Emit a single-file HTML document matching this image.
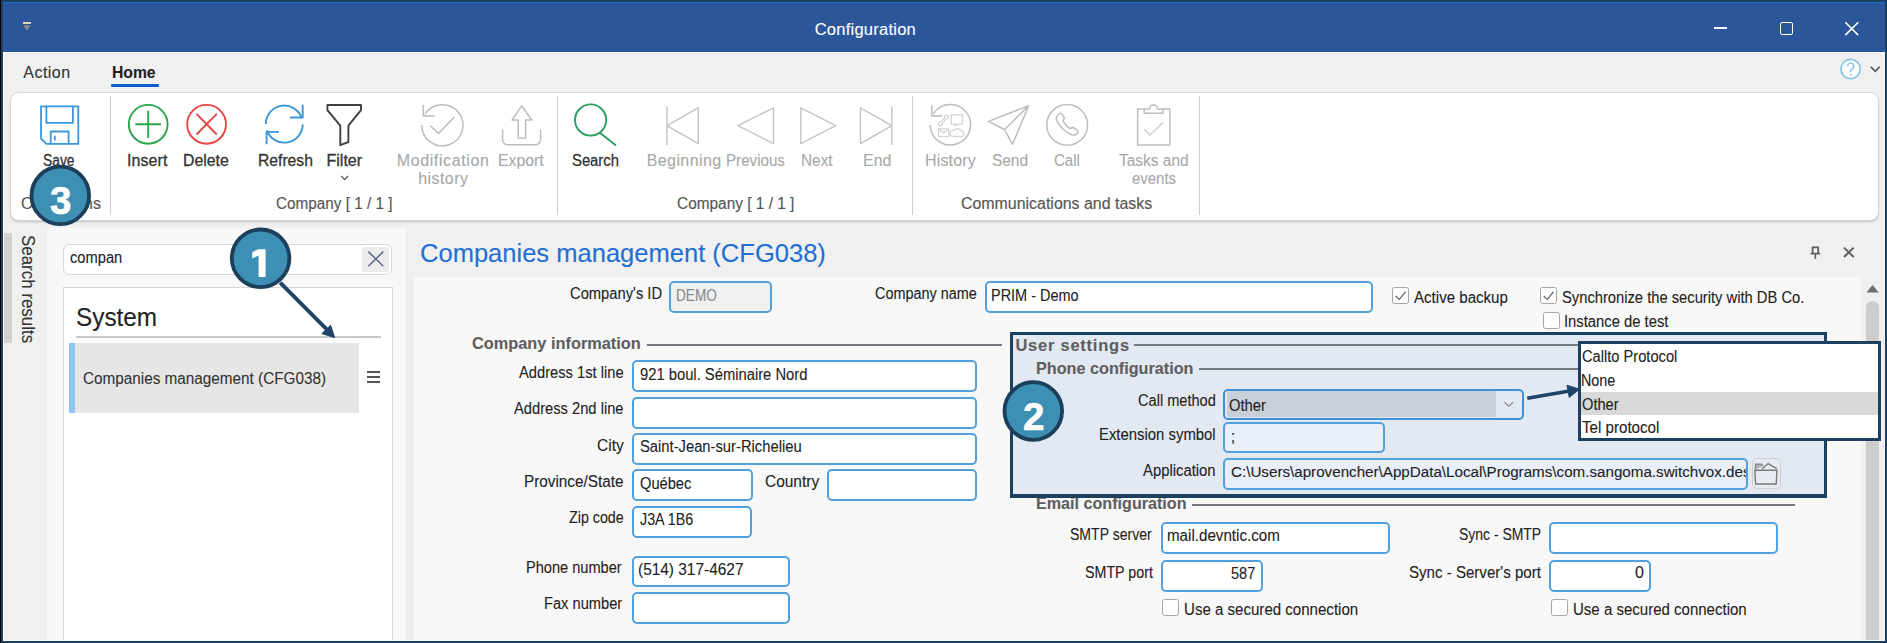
<!DOCTYPE html>
<html><head><meta charset="utf-8">
<style>
*{margin:0;padding:0;box-sizing:border-box}
html,body{width:1887px;height:643px;overflow:hidden;background:#1c4060}
body{position:relative;font-family:"Liberation Sans",sans-serif;color:#222}
.a{position:absolute}
.t{position:absolute;white-space:nowrap;-webkit-text-stroke:0.1px currentColor}
.inp{position:absolute;border:2px solid #52a0dc;border-radius:5px;background:#fff}
.cb{position:absolute;width:17px;height:17px;border:1.3px solid #a6a6a6;border-radius:2.5px;background:#fff}
svg{position:absolute;overflow:visible}
</style></head><body>
<!-- title bar -->
<div class="a" style="left:3px;top:2px;width:1882px;height:1px;background:#1e6bd0"></div>
<div class="a" style="left:3px;top:3px;width:1882px;height:49px;background:#2b579a"></div>
<!-- client area -->
<div class="a" style="left:3px;top:52px;width:1882px;height:589px;background:#f0f0f0;border-top:1px solid #fff;border-left:1px solid #fff"></div>

<!-- qat icon -->
<div class="a" style="left:23px;top:22px;width:7.5px;height:2px;background:#ddd5c5"></div>
<svg style="left:0;top:0" width="1" height="1"><polygon points="23.2,25.3 30.6,25.3 26.9,30.6" fill="#8c8a80"/></svg>
<!-- window buttons -->
<div class="a" style="left:1714.3px;top:27.3px;width:13.2px;height:1.6px;background:#fff"></div>
<div class="a" style="left:1779.8px;top:21.9px;width:13.2px;height:13.2px;border:1.6px solid #fff;border-radius:2px"></div>
<svg style="left:0;top:0" width="1" height="1"><path d="M1845.3 22.2L1858.2 35.1M1858.2 22.2L1845.3 35.1" stroke="#fff" stroke-width="1.6"/></svg>

<!-- tabs -->
<div class="a" style="left:111.2px;top:84.3px;width:47.4px;height:3.2px;background:#0f5ed0;border-radius:1px"></div>
<!-- help -->
<svg style="left:0;top:0" width="1" height="1"><circle cx="1850.6" cy="69" r="9.6" fill="#fff" stroke="#8cc4e8" stroke-width="1.7"/><path d="M1847.6 66.2a3.1 3.1 0 1 1 4.4 2.8c-1 .5-1.4 1.2-1.4 2.2v1" stroke="#8cc4e8" stroke-width="1.5" fill="none"/><circle cx="1850.6" cy="74.6" r="0.9" fill="#8cc4e8"/><path d="M1870.8 66.8L1875.3 71.3L1879.8 66.8" stroke="#555" stroke-width="1.6" fill="none"/></svg>

<!-- ribbon panel -->
<div class="a" style="left:9.8px;top:91.6px;width:1868.9px;height:129.4px;background:#fff;border:1.8px solid #d6d6d6;border-radius:9px;box-shadow:0 1px 1px #c8c8c8,0 2.5px 3px rgba(0,0,0,0.04)"></div>
<!-- separators -->
<div class="a" style="left:110px;top:96px;width:1.3px;height:119px;background:#cfcfcf"></div>
<div class="a" style="left:557px;top:96px;width:1.3px;height:119px;background:#cfcfcf"></div>
<div class="a" style="left:912px;top:96px;width:1.3px;height:119px;background:#cfcfcf"></div>
<div class="a" style="left:1198.6px;top:96px;width:1.3px;height:119px;background:#cfcfcf"></div>
<!-- ribbon icons -->
<svg style="left:0;top:0" width="1" height="1" fill="none" stroke-linejoin="round">
 <!-- save -->
 <g stroke="#3a96dd" stroke-width="1.8">
  <path d="M41 106.4H78.3V143.9H46.4L41 138.5Z"/>
  <path d="M46.4 106.4V122.9H72.9V106.4"/>
  <path d="M50.7 143.9V131.5H68.6V143.9"/>
  <path d="M54.8 135.7V140.4"/>
 </g>
 <!-- insert -->
 <g stroke="#2ba64c" stroke-width="1.9">
  <circle cx="148.2" cy="124.3" r="19.4"/>
  <path d="M135.3 124.3H161M148.2 110.8V138"/>
 </g>
 <!-- delete -->
 <g stroke="#e84545" stroke-width="1.9">
  <circle cx="206.6" cy="124.3" r="19.4"/>
  <path d="M196.5 113.9L216.8 134.5M216.8 113.9L196.5 134.5"/>
 </g>
 <!-- refresh -->
 <g stroke="#3a96dd" stroke-width="1.9">
  <path d="M265.8 124.1A18.5 18.5 0 0 1 301.7 117.8"/>
  <path d="M302.7 104.7V117.5H289.9"/>
  <path d="M302.8 124.6A18.5 18.5 0 0 1 266.9 130.4"/>
  <path d="M266.6 144.3V131.9H279"/>
 </g>
 <!-- filter -->
 <path stroke="#404040" stroke-width="1.9" d="M327.4 105H361V110.1L348.4 125.7V142L340.3 145.1V125.7L327.4 110.1Z"/>
 <path stroke="#606060" stroke-width="1.4" d="M341.2 176L344.6 179.4L348 176"/>
 <!-- modification history -->
 <g stroke="#bdbdbd" stroke-width="1.5">
  <path d="M421.8 124.9A20.6 20.6 0 1 0 424.9 114.4"/>
  <path d="M423.3 105V116H434.6"/>
  <path d="M430.3 125.7L438.5 133.4L454.4 117.1"/>
 </g>
 <!-- export -->
 <g stroke="#bdbdbd" stroke-width="1.5">
  <path d="M521.7 105.8L512 120.1H518.2V138.1H525.6V120.1H531.8Z"/>
  <path d="M502.6 129.5V139.7A5 5 0 0 0 507.6 144.7H535.6A5 5 0 0 0 540.6 139.7V129.5"/>
 </g>
 <!-- search -->
 <g stroke="#2ba060" stroke-width="1.9">
  <circle cx="590.6" cy="120" r="15.6"/>
  <path d="M599.6 132.6L616 145.6"/>
 </g>
 <!-- nav -->
 <g stroke="#c4c4c4" stroke-width="1.4">
  <path d="M667 106.6V145M698.2 107.8V143.6L667 125.7Z"/>
  <path d="M773.5 107.8V143.6L738 125.7Z"/>
  <path d="M800.8 107.8V143.6L835.8 125.7Z"/>
  <path d="M891.8 106.6V145M860.4 107.8V143.6L891.8 125.7Z"/>
 </g>
 <!-- history -->
 <g stroke="#bdbdbd" stroke-width="1.5">
  <path d="M930.2 124.9A20.2 20.2 0 1 0 933.3 114"/>
  <path d="M931.8 105V116H942.3"/>
 </g>
 <g stroke="#d2d2d2" stroke-width="1.2">
  <rect x="951.2" y="114.8" width="11.3" height="9.3"/>
  <path d="M954 124.1L955.5 126L957 124.1"/>
  <rect x="938.4" y="128.8" width="10.3" height="7.7"/>
  <path d="M938.4 129L943.5 133L948.7 129"/>
  <path d="M952 136.3H962.5A2.8 2.8 0 0 0 961 131A3.6 3.6 0 0 0 954.5 130.5A3 3 0 0 0 952 136.3Z"/>
  <path d="M939.6 125.6C937.6 124.6 938.2 121.4 940.8 121.6L944.6 117.8C944.2 115.8 946.2 114.4 947.6 115.4C949 116.8 948.2 119.4 946 119.2L942.4 122.8C942.8 124.8 941.4 126.4 939.6 125.6Z"/>
 </g>
 <!-- send -->
 <path stroke="#bdbdbd" stroke-width="1.5" d="M988.5 121.4L1028.6 105.8L1012.6 144.3L1004.5 129.5ZM1004.5 129.5L1028.6 105.8"/>
 <!-- call -->
 <g stroke="#bdbdbd" stroke-width="1.5">
  <circle cx="1067.2" cy="124.9" r="20.4"/>
  <path d="M1058.2 114.8C1059.4 113.2 1061.3 113 1062.3 114.3L1064.5 118.3L1062.9 120.6C1064.6 124 1067 126.8 1070.2 128.5L1072.6 127.1L1077.3 130.2C1078.4 131.1 1078.1 132.8 1076.8 133.9C1075.4 135.1 1073.9 135.6 1071.9 134.9C1065.4 132.2 1059.8 126.6 1056.7 120.5C1056 118.5 1056.6 116.3 1058.2 114.8Z"/>
 </g>
 <!-- tasks -->
 <g stroke="#bdbdbd" stroke-width="1.5">
  <path d="M1144.2 108.9H1137.6V145.1H1169.9V108.9H1162.9"/>
  <path d="M1144.2 108.9V113.2H1162.9V108.9H1157.5A3.9 3.9 0 0 0 1149.6 108.9Z"/>
 </g>
 <path stroke="#d0d0d0" stroke-width="1.5" d="M1144.2 129.2L1150 135L1162.9 122.6"/>
</svg>

<!-- left side tab -->
<div class="a" style="left:4px;top:233px;width:8px;height:110px;background:#d0d0d0"></div>
<div class="t" style="left:36.7px;top:234.8px;font-size:18px;line-height:18px;color:#333;transform-origin:0 0;transform:rotate(90deg) scaleX(0.94)">Search results</div>
<!-- left panel -->
<div class="a" style="left:47px;top:228px;width:359px;height:413px;background:#f8f8f8"></div>
<div class="a" style="left:62.8px;top:243.5px;width:329.7px;height:31.5px;background:#fff;border:1.7px solid #d8d8d8;border-radius:6px"></div>
<div class="a" style="left:362px;top:247.4px;width:27px;height:24.3px;background:#ececec;border-radius:3px"></div>
<svg style="left:0;top:0" width="1" height="1"><path d="M368.3 251.6L383.3 266.3M383.3 251.6L368.3 266.3" stroke="#5a6a8a" stroke-width="1.5"/></svg>
<div class="a" style="left:62.6px;top:286.8px;width:330px;height:360px;background:#fff;border:1.8px solid #d6d6d6"></div>
<div class="a" style="left:76.4px;top:336.3px;width:305px;height:1.4px;background:#c8c8c8"></div>
<div class="a" style="left:69.3px;top:342.6px;width:289.7px;height:70.6px;background:#e6e6e6"></div>
<div class="a" style="left:69.3px;top:342.6px;width:5.6px;height:70.6px;background:#8ec8f0"></div>
<div class="a" style="left:367.4px;top:371px;width:12.6px;height:2px;background:#555"></div>
<div class="a" style="left:367.4px;top:376px;width:12.6px;height:2px;background:#555"></div>
<div class="a" style="left:367.4px;top:381px;width:12.6px;height:2px;background:#555"></div>

<!-- main header strip -->
<div class="a" style="left:406px;top:229px;width:8px;height:412px;background:#efefef"></div>
<!-- main form area -->
<div class="a" style="left:414px;top:276.6px;width:1446.5px;height:365px;background:#f8f8f8"></div>
<!-- pin & close -->
<svg style="left:0;top:0" width="1" height="1">
 <path d="M1812.6 247.4H1818.2V253.6H1812.6Z M1810.6 253.6H1820.2" stroke="#606060" stroke-width="1.8" fill="none"/>
 <path d="M1815.4 253.6V259" stroke="#606060" stroke-width="1.6"/>
 <path d="M1844 247.6L1853.7 257M1853.7 247.6L1844 257" stroke="#606060" stroke-width="2"/>
</svg>
<!-- scrollbar -->
<svg style="left:0;top:0" width="1" height="1"><polygon points="1866.4,292.4 1878.8,292.4 1872.6,285" fill="#6e6e6e"/></svg>
<div class="a" style="left:1866.3px;top:300.5px;width:12.7px;height:345px;background:#cdcdcd;border-radius:6px 6px 0 0"></div>

<!-- inputs -->
<div class="inp" style="left:669.3px;top:281.3px;width:102.6px;height:31.7px;background:#f0f0f0"></div>
<div class="inp" style="left:985.4px;top:281.4px;width:387.8px;height:31.7px"></div>
<div class="cb" style="left:1392px;top:287.3px"></div>
<div class="cb" style="left:1540px;top:287.3px"></div>
<svg style="left:0;top:0" width="1" height="1" fill="none" stroke="#6a6a6a" stroke-width="1.3"><path d="M1395.7 296L1399.3 299.4L1405.6 291.6"/><path d="M1543.7 296L1547.3 299.4L1553.6 291.6"/></svg>
<div class="cb" style="left:1542.5px;top:312px"></div>

<!-- company info -->
<div class="a" style="left:646.5px;top:344px;width:355.3px;height:1.6px;background:#747a80"></div>
<div class="inp" style="left:632.1px;top:360.2px;width:344.7px;height:32.2px"></div>
<div class="inp" style="left:632.1px;top:396.9px;width:344.7px;height:32.2px"></div>
<div class="inp" style="left:632.1px;top:433.1px;width:344.7px;height:32.2px"></div>
<div class="inp" style="left:632.1px;top:469.4px;width:120.5px;height:31.9px"></div>
<div class="inp" style="left:826.9px;top:469.4px;width:149.9px;height:31.9px"></div>
<div class="inp" style="left:632.1px;top:505.7px;width:119.5px;height:32.2px"></div>
<div class="inp" style="left:632.1px;top:555.6px;width:157.9px;height:31.8px"></div>
<div class="inp" style="left:632.1px;top:591.9px;width:157.9px;height:31.8px"></div>

<!-- email config -->
<div class="a" style="left:1191.8px;top:504.1px;width:603.2px;height:1.6px;background:#747a80"></div>
<div class="inp" style="left:1160.9px;top:522px;width:229.1px;height:32.2px"></div>
<div class="inp" style="left:1160.9px;top:559.7px;width:102.3px;height:32.1px"></div>
<div class="inp" style="left:1549.3px;top:522.1px;width:229.2px;height:32.3px"></div>
<div class="inp" style="left:1549.3px;top:559.8px;width:102px;height:31.8px"></div>
<div class="cb" style="left:1162.3px;top:598.6px"></div>
<div class="cb" style="left:1550.9px;top:598.8px"></div>

<!-- user settings box -->
<div class="a" style="left:1009.9px;top:332.2px;width:817.3px;height:165.5px;background:#e3e9f2;border:3.8px solid #1c4060"></div>
<div class="a" style="left:1133.8px;top:344.2px;width:450px;height:1.6px;background:#747a80"></div>
<div class="a" style="left:1198.5px;top:368.3px;width:385px;height:1.6px;background:#747a80"></div>
<div class="inp" style="left:1223.4px;top:388.7px;width:300.4px;height:31.7px;background:#e3e9f2;border:2px solid #3d8fd8"></div>
<div class="a" style="left:1226.5px;top:391.4px;width:269.8px;height:25.8px;background:#c9cfd9;border-radius:2px"></div>
<svg style="left:0;top:0" width="1" height="1"><path d="M1504.6 402.2L1508.8 406.4L1513 402.2" stroke="#8a8a8a" stroke-width="1.3" fill="none"/></svg>
<div class="inp" style="left:1223.4px;top:422.4px;width:161.3px;height:31.1px;background:#e9eff8"></div>
<div class="inp" style="left:1223.4px;top:458.1px;width:524.8px;height:31.7px;background:#e9eff8;overflow:hidden"><div class="t" id="apptext" style="left:5.3px;top:3.8px;font-size:15.5px;line-height:15.5px;color:#222;transform-origin:0 0;transform:scaleX(0.979)">C:\Users\aprovencher\AppData\Local\Programs\com.sangoma.switchvox.desktop</div></div>
<div class="a" style="left:1751.6px;top:458.3px;width:29.8px;height:31px;background:#e6ebf2;border:1.3px solid #c8ced6;border-radius:5px"></div>
<svg style="left:0;top:0" width="1" height="1" fill="none" stroke="#7a7a7a" stroke-width="1.4"><path d="M1755.5 469.5V464.2H1761.8L1763 466" fill="#b0b0b0" stroke="#8a8a8a"/><path d="M1762 469L1768 463.6L1776.8 468.6"/><path d="M1754.8 470.3H1777L1776.2 484H1755.6Z"/></svg>

<!-- popup -->
<div class="a" style="left:1578px;top:341.1px;width:303.2px;height:100.4px;background:#fff;border:3.2px solid #1c4060"></div>
<div class="a" style="left:1581.2px;top:392.1px;width:296.8px;height:22.5px;background:#d9d9d9"></div>
<!--POPUP-->

<div class="t" style="left:814.70px;top:21px;font-size:16.5px;line-height:16.5px;font-weight:normal;color:#fff;letter-spacing:0.244px;">Configuration</div>
<div class="t" style="left:23.30px;top:65px;font-size:16px;line-height:16px;font-weight:normal;color:#333;letter-spacing:0.466px;">Action</div>
<div class="t" style="left:111.82px;top:65px;font-size:16px;line-height:16px;font-weight:bold;color:#222;letter-spacing:0.000px;transform-origin:0 0;transform:scaleX(0.9804);">Home</div>
<div class="t" style="left:43.40px;top:153px;font-size:16px;line-height:16px;font-weight:normal;color:#333;letter-spacing:0.000px;transform-origin:0 0;transform:scaleX(0.8641);-webkit-text-stroke:0.3px currentColor;">Save</div>
<div class="t" style="left:127.00px;top:153px;font-size:16px;line-height:16px;font-weight:normal;color:#333;letter-spacing:0.086px;-webkit-text-stroke:0.3px currentColor;">Insert</div>
<div class="t" style="left:183.41px;top:153px;font-size:16px;line-height:16px;font-weight:normal;color:#333;letter-spacing:0.000px;transform-origin:0 0;transform:scaleX(0.9900);-webkit-text-stroke:0.3px currentColor;">Delete</div>
<div class="t" style="left:258.22px;top:153px;font-size:16px;line-height:16px;font-weight:normal;color:#333;letter-spacing:0.000px;transform-origin:0 0;transform:scaleX(0.9792);-webkit-text-stroke:0.3px currentColor;">Refresh</div>
<div class="t" style="left:326.40px;top:153px;font-size:16px;line-height:16px;font-weight:normal;color:#333;letter-spacing:0.035px;-webkit-text-stroke:0.3px currentColor;">Filter</div>
<div class="t" style="left:396.70px;top:153px;font-size:16px;line-height:16px;font-weight:normal;color:#a8a8a8;letter-spacing:0.620px;">Modification</div>
<div class="t" style="left:418.30px;top:171px;font-size:16px;line-height:16px;font-weight:normal;color:#a8a8a8;letter-spacing:0.412px;">history</div>
<div class="t" style="left:497.81px;top:153px;font-size:16px;line-height:16px;font-weight:normal;color:#a8a8a8;letter-spacing:0.000px;transform-origin:0 0;transform:scaleX(0.9892);">Export</div>
<div class="t" style="left:572.40px;top:153px;font-size:16px;line-height:16px;font-weight:normal;color:#333;letter-spacing:0.000px;transform-origin:0 0;transform:scaleX(0.9258);-webkit-text-stroke:0.3px currentColor;">Search</div>
<div class="t" style="left:646.70px;top:153px;font-size:16px;line-height:16px;font-weight:normal;color:#a8a8a8;letter-spacing:0.416px;">Beginning</div>
<div class="t" style="left:726.05px;top:153px;font-size:16px;line-height:16px;font-weight:normal;color:#a8a8a8;letter-spacing:0.000px;transform-origin:0 0;transform:scaleX(0.9469);">Previous</div>
<div class="t" style="left:800.84px;top:153px;font-size:16px;line-height:16px;font-weight:normal;color:#a8a8a8;letter-spacing:0.000px;transform-origin:0 0;transform:scaleX(0.9614);">Next</div>
<div class="t" style="left:862.50px;top:153px;font-size:16px;line-height:16px;font-weight:normal;color:#a8a8a8;letter-spacing:0.000px;transform-origin:0 0;transform:scaleX(0.9974);">End</div>
<div class="t" style="left:925.00px;top:153px;font-size:16px;line-height:16px;font-weight:normal;color:#a8a8a8;letter-spacing:0.153px;">History</div>
<div class="t" style="left:991.50px;top:153px;font-size:16px;line-height:16px;font-weight:normal;color:#a8a8a8;letter-spacing:0.000px;transform-origin:0 0;transform:scaleX(0.9625);">Send</div>
<div class="t" style="left:1054.00px;top:153px;font-size:16px;line-height:16px;font-weight:normal;color:#a8a8a8;letter-spacing:0.000px;transform-origin:0 0;transform:scaleX(0.9405);">Call</div>
<div class="t" style="left:1119.20px;top:153px;font-size:16px;line-height:16px;font-weight:normal;color:#a8a8a8;letter-spacing:0.000px;transform-origin:0 0;transform:scaleX(0.9671);">Tasks and</div>
<div class="t" style="left:1132.40px;top:171px;font-size:16px;line-height:16px;font-weight:normal;color:#a8a8a8;letter-spacing:0.000px;transform-origin:0 0;transform:scaleX(0.9334);">events</div>
<div class="t" style="left:21.00px;top:196px;font-size:16px;line-height:16px;font-weight:normal;color:#555;letter-spacing:0.193px;-webkit-text-stroke:0.15px currentColor;">Operations</div>
<div class="t" style="left:276.00px;top:196px;font-size:16px;line-height:16px;font-weight:normal;color:#555;letter-spacing:0.000px;transform-origin:0 0;transform:scaleX(0.9556);-webkit-text-stroke:0.15px currentColor;">Company [ 1 / 1 ]</div>
<div class="t" style="left:676.80px;top:196px;font-size:16px;line-height:16px;font-weight:normal;color:#555;letter-spacing:0.000px;transform-origin:0 0;transform:scaleX(0.9630);-webkit-text-stroke:0.15px currentColor;">Company [ 1 / 1 ]</div>
<div class="t" style="left:960.50px;top:196px;font-size:16px;line-height:16px;font-weight:normal;color:#555;letter-spacing:0.000px;transform-origin:0 0;transform:scaleX(0.9949);-webkit-text-stroke:0.15px currentColor;">Communications and tasks</div>
<div class="t" style="left:70.20px;top:250px;font-size:16px;line-height:16px;font-weight:normal;color:#222;letter-spacing:0.000px;transform-origin:0 0;transform:scaleX(0.9175);">compan</div>
<div class="t" style="left:76.45px;top:305px;font-size:25.5px;line-height:25.5px;font-weight:normal;color:#222;letter-spacing:0.000px;transform-origin:0 0;transform:scaleX(0.9544);">System</div>
<div class="t" style="left:82.70px;top:371px;font-size:16px;line-height:16px;font-weight:normal;color:#333;letter-spacing:0.000px;transform-origin:0 0;transform:scaleX(0.9555);">Companies management (CFG038)</div>
<div class="t" style="left:420.21px;top:241px;font-size:25.7px;line-height:25.7px;font-weight:normal;color:#1f6fd6;letter-spacing:0.000px;transform-origin:0 0;transform:scaleX(0.9939);">Companies management (CFG038)</div>
<div class="t" style="left:569.70px;top:286px;font-size:16px;line-height:16px;font-weight:normal;color:#222;letter-spacing:0.000px;transform-origin:0 0;transform:scaleX(0.9213);">Company&#x27;s ID</div>
<div class="t" style="left:676.15px;top:288px;font-size:16px;line-height:16px;font-weight:normal;color:#8a8a8a;letter-spacing:0.000px;transform-origin:0 0;transform:scaleX(0.8506);">DEMO</div>
<div class="t" style="left:874.90px;top:286px;font-size:16px;line-height:16px;font-weight:normal;color:#222;letter-spacing:0.000px;transform-origin:0 0;transform:scaleX(0.9014);">Company name</div>
<div class="t" style="left:991.30px;top:288px;font-size:16px;line-height:16px;font-weight:normal;color:#222;letter-spacing:0.000px;transform-origin:0 0;transform:scaleX(0.9042);">PRIM - Demo</div>
<div class="t" style="left:1414.40px;top:290px;font-size:16px;line-height:16px;font-weight:normal;color:#222;letter-spacing:0.000px;transform-origin:0 0;transform:scaleX(0.9427);">Active backup</div>
<div class="t" style="left:1562.00px;top:290px;font-size:16px;line-height:16px;font-weight:normal;color:#222;letter-spacing:0.000px;transform-origin:0 0;transform:scaleX(0.9206);">Synchronize the security with DB Co.</div>
<div class="t" style="left:1563.88px;top:314px;font-size:16px;line-height:16px;font-weight:normal;color:#222;letter-spacing:0.000px;transform-origin:0 0;transform:scaleX(0.9243);">Instance de test</div>
<div class="t" style="left:472.00px;top:335px;font-size:16.5px;line-height:16.5px;font-weight:bold;color:#5e5e5e;letter-spacing:0.000px;transform-origin:0 0;transform:scaleX(0.9899);">Company information</div>
<div class="t" style="left:518.90px;top:365px;font-size:16px;line-height:16px;font-weight:normal;color:#222;letter-spacing:0.000px;transform-origin:0 0;transform:scaleX(0.9189);">Address 1st line</div>
<div class="t" style="left:639.70px;top:367px;font-size:16px;line-height:16px;font-weight:normal;color:#222;letter-spacing:0.000px;transform-origin:0 0;transform:scaleX(0.9228);">921 boul. Séminaire Nord</div>
<div class="t" style="left:514.00px;top:401px;font-size:16px;line-height:16px;font-weight:normal;color:#222;letter-spacing:0.000px;transform-origin:0 0;transform:scaleX(0.9188);">Address 2nd line</div>
<div class="t" style="left:596.90px;top:438px;font-size:16px;line-height:16px;font-weight:normal;color:#222;letter-spacing:0.000px;transform-origin:0 0;transform:scaleX(0.9690);">City</div>
<div class="t" style="left:639.70px;top:439px;font-size:16px;line-height:16px;font-weight:normal;color:#222;letter-spacing:0.000px;transform-origin:0 0;transform:scaleX(0.9226);">Saint-Jean-sur-Richelieu</div>
<div class="t" style="left:524.04px;top:474px;font-size:16px;line-height:16px;font-weight:normal;color:#222;letter-spacing:0.000px;transform-origin:0 0;transform:scaleX(0.9558);">Province/State</div>
<div class="t" style="left:639.70px;top:476px;font-size:16px;line-height:16px;font-weight:normal;color:#222;letter-spacing:0.000px;transform-origin:0 0;transform:scaleX(0.9154);">Québec</div>
<div class="t" style="left:764.60px;top:474px;font-size:16px;line-height:16px;font-weight:normal;color:#222;letter-spacing:0.000px;transform-origin:0 0;transform:scaleX(0.9657);">Country</div>
<div class="t" style="left:568.80px;top:510px;font-size:16px;line-height:16px;font-weight:normal;color:#222;letter-spacing:0.000px;transform-origin:0 0;transform:scaleX(0.8915);">Zip code</div>
<div class="t" style="left:639.70px;top:512px;font-size:16px;line-height:16px;font-weight:normal;color:#222;letter-spacing:0.000px;transform-origin:0 0;transform:scaleX(0.8913);">J3A 1B6</div>
<div class="t" style="left:526.39px;top:560px;font-size:16px;line-height:16px;font-weight:normal;color:#222;letter-spacing:0.000px;transform-origin:0 0;transform:scaleX(0.9108);">Phone number</div>
<div class="t" style="left:638.34px;top:562px;font-size:16px;line-height:16px;font-weight:normal;color:#222;letter-spacing:0.000px;transform-origin:0 0;transform:scaleX(0.9639);">(514) 317-4627</div>
<div class="t" style="left:543.78px;top:596px;font-size:16px;line-height:16px;font-weight:normal;color:#222;letter-spacing:0.000px;transform-origin:0 0;transform:scaleX(0.9160);">Fax number</div>
<div class="t" style="left:1015.40px;top:337px;font-size:16.5px;line-height:16.5px;font-weight:bold;color:#5e5e5e;letter-spacing:0.762px;">User settings</div>
<div class="t" style="left:1036.22px;top:360px;font-size:16.5px;line-height:16.5px;font-weight:bold;color:#5e5e5e;letter-spacing:0.000px;transform-origin:0 0;transform:scaleX(0.9816);">Phone configuration</div>
<div class="t" style="left:1137.90px;top:393px;font-size:16px;line-height:16px;font-weight:normal;color:#222;letter-spacing:0.000px;transform-origin:0 0;transform:scaleX(0.9115);">Call method</div>
<div class="t" style="left:1228.60px;top:398px;font-size:16px;line-height:16px;font-weight:normal;color:#222;letter-spacing:0.000px;transform-origin:0 0;transform:scaleX(0.9241);">Other</div>
<div class="t" style="left:1098.87px;top:427px;font-size:16px;line-height:16px;font-weight:normal;color:#222;letter-spacing:0.000px;transform-origin:0 0;transform:scaleX(0.9303);">Extension symbol</div>
<div class="t" style="left:1230.70px;top:429px;font-size:16px;line-height:16px;font-weight:normal;color:#222;letter-spacing:0.000px;">;</div>
<div class="t" style="left:1143.30px;top:463px;font-size:16px;line-height:16px;font-weight:normal;color:#222;letter-spacing:0.000px;transform-origin:0 0;transform:scaleX(0.9267);">Application</div>
<div class="t" style="left:1036.12px;top:495px;font-size:16.5px;line-height:16.5px;font-weight:bold;color:#5e5e5e;letter-spacing:0.000px;transform-origin:0 0;transform:scaleX(0.9776);">Email configuration</div>
<div class="t" style="left:1069.50px;top:527px;font-size:16px;line-height:16px;font-weight:normal;color:#222;letter-spacing:0.000px;transform-origin:0 0;transform:scaleX(0.8775);">SMTP server</div>
<div class="t" style="left:1167.05px;top:528px;font-size:16px;line-height:16px;font-weight:normal;color:#222;letter-spacing:0.000px;transform-origin:0 0;transform:scaleX(0.9464);">mail.devntic.com</div>
<div class="t" style="left:1084.70px;top:565px;font-size:16px;line-height:16px;font-weight:normal;color:#222;letter-spacing:0.000px;transform-origin:0 0;transform:scaleX(0.8907);">SMTP port</div>
<div class="t" style="left:1230.70px;top:566px;font-size:16px;line-height:16px;font-weight:normal;color:#222;letter-spacing:0.000px;transform-origin:0 0;transform:scaleX(0.9068);">587</div>
<div class="t" style="left:1184.06px;top:602px;font-size:16px;line-height:16px;font-weight:normal;color:#222;letter-spacing:0.000px;transform-origin:0 0;transform:scaleX(0.9416);">Use a secured connection</div>
<div class="t" style="left:1459.00px;top:527px;font-size:16px;line-height:16px;font-weight:normal;color:#222;letter-spacing:0.000px;transform-origin:0 0;transform:scaleX(0.8721);">Sync - SMTP</div>
<div class="t" style="left:1409.00px;top:565px;font-size:16px;line-height:16px;font-weight:normal;color:#222;letter-spacing:0.000px;transform-origin:0 0;transform:scaleX(0.9421);">Sync - Server&#x27;s port</div>
<div class="t" style="left:1635.00px;top:565px;font-size:16px;line-height:16px;font-weight:normal;color:#222;letter-spacing:0.000px;">0</div>
<div class="t" style="left:1572.66px;top:602px;font-size:16px;line-height:16px;font-weight:normal;color:#222;letter-spacing:0.000px;transform-origin:0 0;transform:scaleX(0.9388);">Use a secured connection</div>
<div class="t" style="left:1581.50px;top:349px;font-size:16px;line-height:16px;font-weight:normal;color:#222;letter-spacing:0.000px;transform-origin:0 0;transform:scaleX(0.9160);">Callto Protocol</div>
<div class="t" style="left:1580.60px;top:373px;font-size:16px;line-height:16px;font-weight:normal;color:#222;letter-spacing:0.000px;transform-origin:0 0;transform:scaleX(0.8969);">None</div>
<div class="t" style="left:1581.50px;top:397px;font-size:16px;line-height:16px;font-weight:normal;color:#222;letter-spacing:0.000px;transform-origin:0 0;transform:scaleX(0.9143);">Other</div>
<div class="t" style="left:1581.50px;top:420px;font-size:16px;line-height:16px;font-weight:normal;color:#222;letter-spacing:0.000px;transform-origin:0 0;transform:scaleX(0.9450);">Tel protocol</div>

<div class="a" style="left:1009.9px;top:493.9px;width:817.3px;height:3.8px;background:#1c4060"></div>
<!-- badges & arrows -->
<svg style="left:0;top:0" width="1" height="1">
 <g fill="#1d4467" stroke="#1d4467">
  <path d="M280.2 282.6L328 330.6" stroke-width="3.8"/>
  <polygon points="334.6,337.6 321.9,333.6 330.6,325.2" stroke-width="1"/>
  <path d="M1527.3 398.2L1568 391.2" stroke-width="3.6"/>
  <polygon points="1579.5,389.2 1567,385.2 1569.2,397.4" stroke-width="1"/>
 </g>
 <g fill="#3d8fb3" stroke="#1c3f5c" stroke-width="3.8">
  <circle cx="260.6" cy="258.3" r="28.8"/>
  <circle cx="1033.3" cy="411" r="28.8"/>
  <circle cx="60.3" cy="195.4" r="28.8"/>
 </g>
 <g fill="#fff" stroke="#fff" stroke-width="0.7" style="font-family:'Liberation Sans';font-weight:bold;font-size:38.5px" text-anchor="middle">
  
  <text x="1033.6" y="429.9">2</text>
  <text x="60.6" y="213.9">3</text>
 </g>
</svg>

<svg style="left:0;top:0" width="1" height="1"><path d="M258.2 249.2H265.6V277H258.6V255.4L252.2 258.5V252.2Z" fill="#fff"/></svg>
<div class="a" style="left:474px;top:639.5px;width:6px;height:1.2px;background:#9a9a9a"></div><div class="a" style="left:493px;top:639.5px;width:2px;height:1.2px;background:#8a8a8a"></div><div class="a" style="left:500px;top:639.5px;width:2px;height:1.2px;background:#8a8a8a"></div><div class="a" style="left:507px;top:639.5px;width:2px;height:1.2px;background:#8a8a8a"></div>
<!-- frame -->
<div class="a" style="left:3px;top:640px;width:1882px;height:1px;background:#fff"></div>
<div class="a" style="left:0;top:641px;width:1887px;height:2px;background:#1c4060"></div>
<div class="a" style="left:1885px;top:0;width:2px;height:643px;background:#1c4060"></div>
<div class="a" style="left:1px;top:0;width:2px;height:643px;background:#1c4060"></div>
<div class="a" style="left:0;top:0;width:1887px;height:2px;background:#1c4060"></div>
<div class="a" style="left:0;top:0;width:1px;height:643px;background:#000"></div>
</body></html>
